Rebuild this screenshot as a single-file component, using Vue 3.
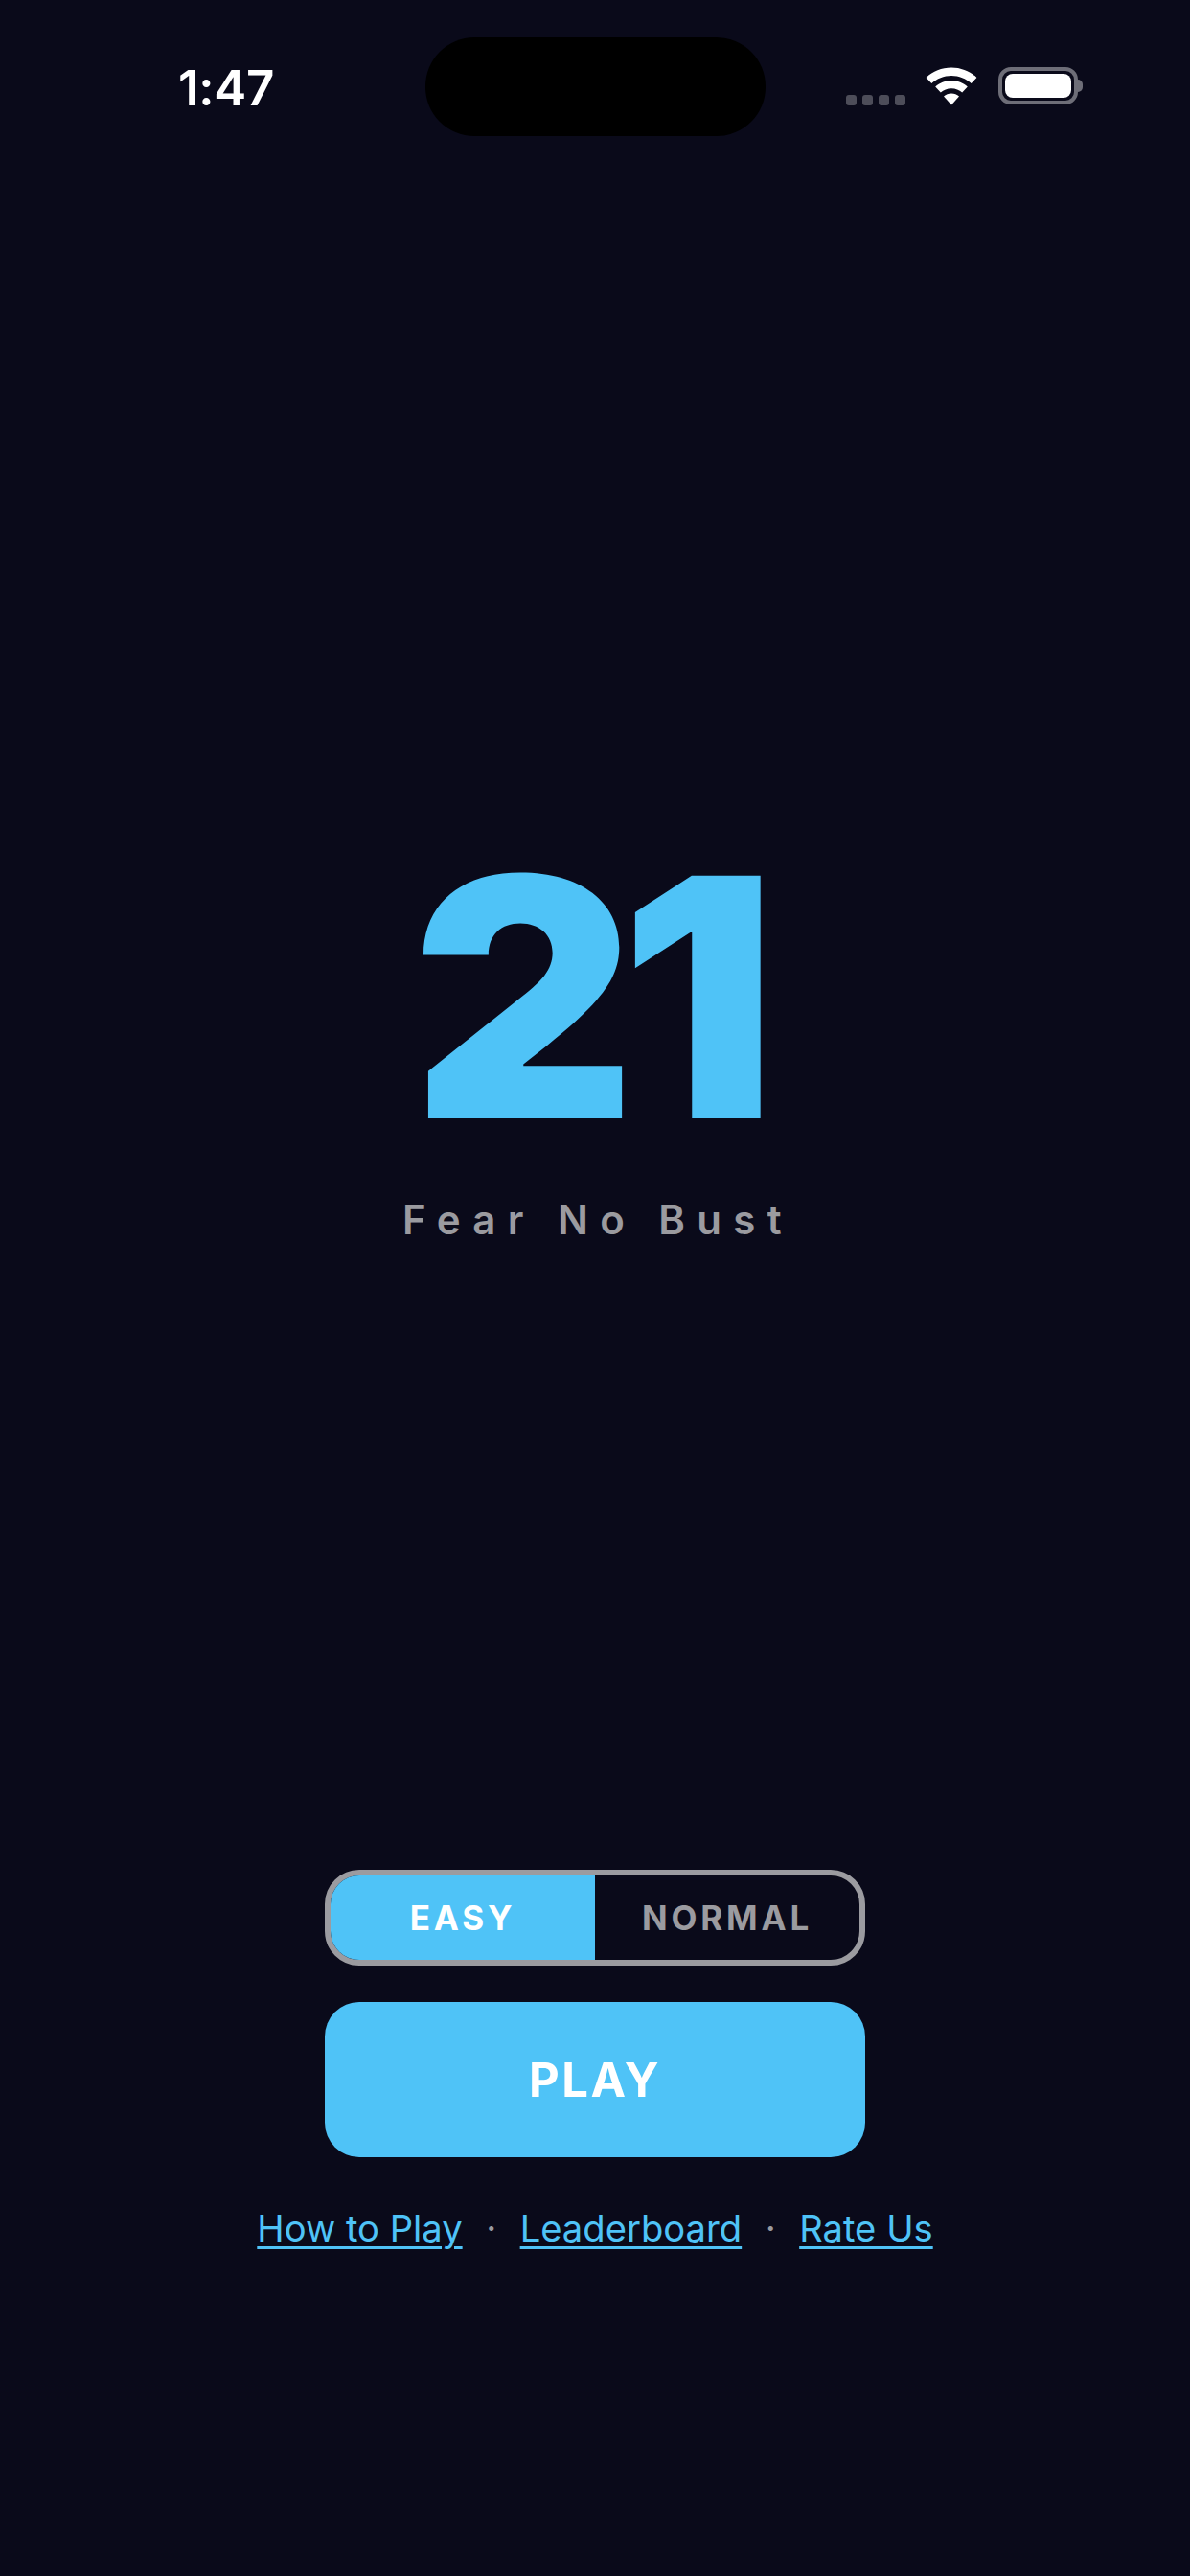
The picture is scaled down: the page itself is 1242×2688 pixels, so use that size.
<script setup>
import { ref } from 'vue'
const difficulty = ref('EASY')
const modes = ['EASY', 'NORMAL']
const links = ['How to Play', 'Leaderboard', 'Rate Us']
</script>

<template>
  <main class="screen">
    <header class="status">
      <span class="time">1:47</span>
      <div class="island"></div>
      <div class="indicators">
        <div class="signal"><i></i><i></i><i></i><i></i></div>
        <svg class="wifi" viewBox="0 0 54 40" width="54" height="40">
          <path fill="#fff" d="M27 0.5C16.8 0.5 7.6 4.4 0.6 10.9L6.3 17C11.8 11.9 19 8.9 27 8.9S42.2 11.9 47.7 17L53.4 10.9C46.4 4.4 37.2 0.5 27 0.5Z"/>
          <path fill="#fff" d="M27 14C20.5 14 14.7 16.4 10.2 20.6L15.8 26.6C18.8 23.8 22.7 22.2 27 22.2S35.2 23.8 38.2 26.6L43.8 20.6C39.3 16.4 33.5 14 27 14Z"/>
          <path fill="#fff" d="M27 27.4C23.9 27.4 21.2 28.5 19 30.5L27 39.5L35 30.5C32.8 28.5 30.1 27.4 27 27.4Z"/>
        </svg>
        <div class="battery"><div class="level"></div><div class="cap"></div></div>
      </div>
    </header>

    <section class="hero">
      <h1 class="logo">21</h1>
      <p class="tagline">Fear No Bust</p>
    </section>

    <section class="controls">
      <div class="toggle">
        <button v-for="m in modes" :key="m" class="mode" :class="{ active: difficulty === m }" @click="difficulty = m">{{ m }}</button>
      </div>
      <button class="play">PLAY</button>
      <nav class="links">
        <template v-for="(l, i) in links" :key="l">
          <span v-if="i" class="sep">·</span>
          <a class="link" href="#">{{ l }}</a>
        </template>
      </nav>
    </section>
  </main>
</template>

<style>
html, body { margin: 0; background: #0a0a1a; }
</style>

<style scoped>
.screen {
  width: 1242px;
  height: 2688px;
  background: #0a0a1a;
  display: flex;
  flex-direction: column;
  font-family: Inter, "Liberation Sans", sans-serif;
  overflow: hidden;
}
.status {
  height: 103px;
  padding-top: 39px;
  display: grid;
  grid-template-columns: 1fr 355px 1fr;
  align-items: start;
}
.time {
  padding: 23px 0 0 186px;
  font-size: 51px;
  line-height: 60px;
  font-weight: 600;
  letter-spacing: -0.3px;
  color: #fff;
}
.island {
  width: 355px;
  height: 103px;
  border-radius: 51px;
  background: #000;
}
.indicators {
  display: flex;
  align-items: flex-start;
  padding: 31px 0 0 84px;
}
.signal {
  display: flex;
  gap: 6px;
  margin-top: 29px;
}
.signal i {
  width: 11px;
  height: 11px;
  border-radius: 3px;
  background: #4d4d59;
}
.wifi {
  margin-left: 21px;
}
.battery {
  position: relative;
  box-sizing: border-box;
  width: 83px;
  height: 39px;
  margin-left: 22px;
  border: 4px solid #6e6e78;
  border-radius: 13px;
  padding: 3px;
}
.level {
  width: 100%;
  height: 100%;
  background: #fff;
  border-radius: 8px;
}
.cap {
  position: absolute;
  right: -9px;
  top: 9px;
  width: 5px;
  height: 13px;
  background: #6e6e78;
  border-radius: 0 6px 6px 0;
}
.hero {
  padding-top: 691px;
  display: flex;
  flex-direction: column;
  align-items: center;
}
.logo {
  margin: 0;
  font-size: 348px;
  line-height: 415px;
  font-weight: 900;
  letter-spacing: -16px;
  color: #4fc3f7;
  text-indent: -18px;
  transform: scaleX(1.04);
}
.tagline {
  margin: 0;
  padding-left: 6px;
  font-size: 42px;
  line-height: 50px;
  font-weight: 600;
  letter-spacing: 12.4px;
  color: #9b9ba0;
}
.controls {
  margin-top: 653px;
  display: flex;
  flex-direction: column;
  align-items: center;
}
.toggle {
  box-sizing: border-box;
  width: 564px;
  height: 100px;
  display: flex;
  border: 6px solid #9b9ba0;
  border-radius: 36px;
  overflow: hidden;
}
.mode {
  flex: 1;
  border: 0;
  padding: 0;
  background: transparent;
  font: 700 35px Inter, "Liberation Sans", sans-serif;
  letter-spacing: 3.8px;
  color: #9b9ba0;
}
.mode.active {
  background: #4fc3f7;
  color: #fff;
}
.play {
  margin-top: 38px;
  width: 564px;
  height: 162px;
  border: 0;
  border-radius: 36px;
  background: #4fc3f7;
  color: #fff;
  font: 700 49px Inter, "Liberation Sans", sans-serif;
  letter-spacing: 2.5px;
}
.links {
  margin-top: 46px;
  display: flex;
  align-items: center;
  gap: 24.5px;
  font-size: 38.2px;
  line-height: 56px;
}
.link {
  color: #4fc3f7;
  text-decoration: underline;
  text-decoration-thickness: 3px;
  text-underline-offset: 5px;
}
.sep {
  color: #9b9ba0;
}
</style>
